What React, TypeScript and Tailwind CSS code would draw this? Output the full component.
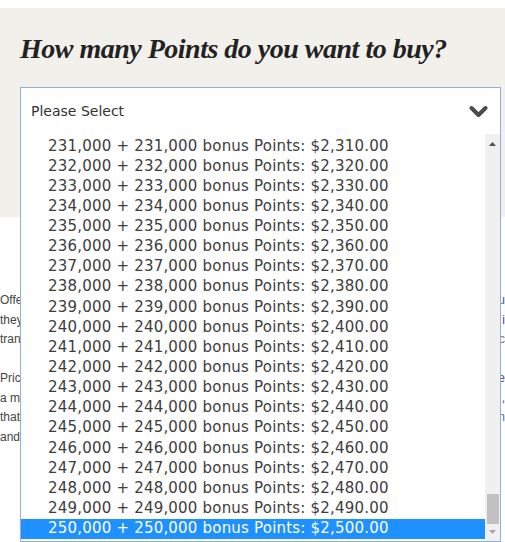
import React from 'react';

const rows = Array.from({ length: 20 }, (_, i) => 231 + i);

const fmt = (n: number) => n.toLocaleString('en-US');

const leftLines = ['Offe', 'they', 'tran', '', 'Pric', 'a m', 'that', 'and'];
const rightLines: [string, string][] = [
  ['u', 'text-[#555]'],
  ['i', 'text-[#6d3a6a]'],
  ['c', 'text-[#8a7a50]'],
  ['', ''],
  ['le', 'text-[#555]'],
  [',', 'text-[#6d3a6a]'],
  ['n', 'text-[#5a6a8a]'],
  ['', ''],
];

export default function App() {
  return (
    <div className="relative w-[505px] h-[542px] overflow-hidden bg-white font-['DejaVu_Sans',sans-serif]">
      <div className="h-[8px] bg-white" />
      <div className="h-[209px] bg-[#f2f0eb] px-5 pt-[25px]">
        <h2 className="font-['Liberation_Serif',serif] italic font-bold text-[28px] leading-[31px] tracking-[-0.5px] text-[#222]">
          How many Points do you want to buy?
        </h2>
        <div className="mt-[23px] w-[481px] h-[48px] bg-white border border-[#8fb0de] flex items-center justify-between pl-[10px] pr-[12px]">
          <span className="text-[14px] text-[#333]">Please Select</span>
          <svg width="19" height="14" viewBox="0 0 19 14" className="mt-[2px]">
            <path d="M2.5 3 L9.5 10 L16.5 3" fill="none" stroke="#4a4a4a" strokeWidth="4" strokeLinecap="round" strokeLinejoin="round" />
          </svg>
        </div>
      </div>

      <div className="mt-[74px] text-[12px] leading-[19.5px] text-[#444] font-['Liberation_Sans',sans-serif]">
        {leftLines.map((l, i) => (
          <div key={i} className="flex justify-between h-[19.5px]">
            <span>{l}</span>
            <span className={rightLines[i][1]}>{rightLines[i][0]}</span>
          </div>
        ))}
      </div>

      <div className="absolute left-[20px] top-[134px] w-[481px] h-[408px] bg-white border-x border-b border-[#8fb0de] flex">
        <div className="flex-1 pt-[2.5px]">
          {rows.map((n) => {
            const sel = n === 250;
            return (
              <div
                key={n}
                className={`h-[20.15px] pl-[27px] text-[15px] leading-[19px] tracking-[0.2px] whitespace-nowrap ${sel ? 'bg-[#1e90ff] text-white' : 'text-[#3d3d3d]'}`}
              >
                {fmt(n * 1000)} + {fmt(n * 1000)} bonus Points: ${fmt(n * 10)}.00
              </div>
            );
          })}
        </div>
        <div className="w-[15px] bg-[#f0f0f0] flex flex-col items-center">
          <svg width="15" height="17" viewBox="0 0 15 17">
            <path d="M4 12 L7.5 8 L11 12 Z" fill="#505050" />
          </svg>
          <div className="flex-1" />
          <div className="w-[12px] h-[30px] bg-[#c1c1c1]" />
          <svg width="15" height="17" viewBox="0 0 15 17">
            <path d="M4 6 L7.5 10 L11 6 Z" fill="#a3a3a3" />
          </svg>
        </div>
      </div>
    </div>
  );
}
